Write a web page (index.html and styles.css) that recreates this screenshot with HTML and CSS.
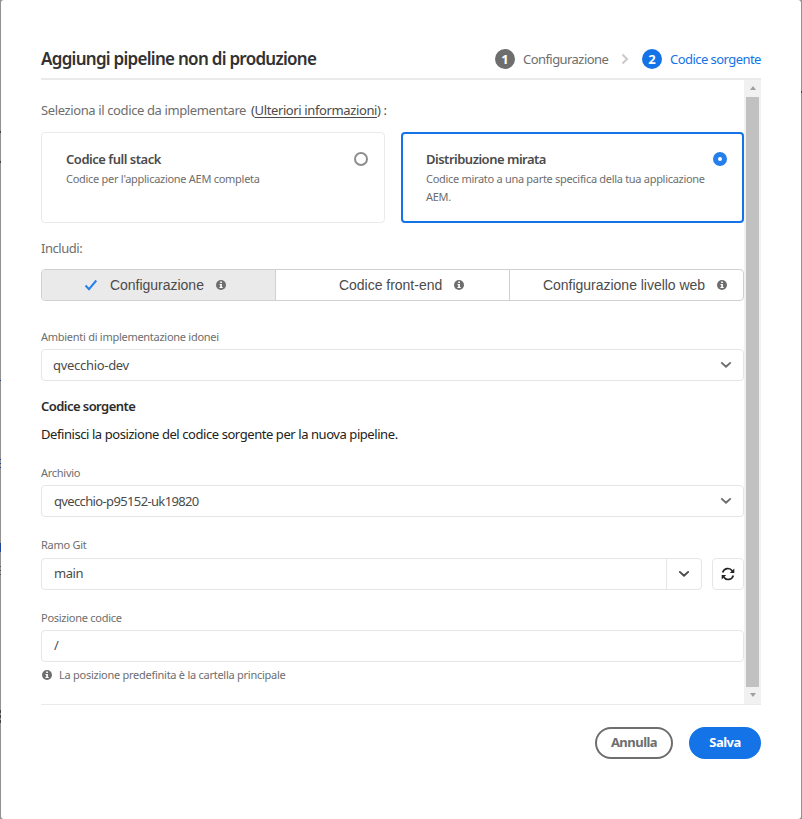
FILE: index.html
```html
<!DOCTYPE html>
<html lang="it">
<head>
<meta charset="utf-8">
<title>Aggiungi pipeline non di produzione</title>
<link rel="stylesheet" href="styles.css">
</head>
<body>
<svg class="defs" width="0" height="0">
  <symbol id="info" viewBox="0 0 10 10"><circle cx="5" cy="5" r="5" fill="#6e6e6e"/><path d="M4.2 1.6h1.7v1.5H4.2zM3.5 4h2.4v3h.8v1.100H3.400V7h.8V5.100h-.7z" fill="#fff"/></symbol>
  <symbol id="chevron" viewBox="0 0 12 8"><path d="M1.800 1.900 6 5.800l4.200-3.900" fill="none" stroke="currentColor" stroke-width="1.900" stroke-linecap="round" stroke-linejoin="round"/></symbol>
</svg>
<div class="dialog">
  <header class="header">
    <h1 class="title">Aggiungi pipeline non di produzione</h1>
    <div class="steps">
      <span class="num">1</span><span class="step s1">Configurazione</span>
      <svg class="sep" width="8" height="12" viewBox="0 0 8 12"><path d="M1.500 1.500 6 6l-4.500 4.500" fill="none" stroke="#cacaca" stroke-width="2"/></svg>
      <span class="num active">2</span><span class="step s2">Codice sorgente</span>
    </div>
  </header>
  <div class="scroller">
    <main class="content">
      <p class="intro"><span class="t-intro">Seleziona il codice da implementare</span><span class="more">(<a>Ulteriori informazioni</a>) :</span></p>
      <div class="cards">
        <section class="card">
          <div class="card-head"><h2>Codice full stack</h2><i class="radio"></i></div>
          <p>Codice per l'applicazione AEM completa</p>
        </section>
        <section class="card selected">
          <div class="card-head"><h2>Distribuzione mirata</h2><i class="radio on"></i></div>
          <p>Codice mirato a una parte specifica della tua applicazione<br>AEM.</p>
        </section>
      </div>
      <p class="include">Includi:</p>
      <div class="segments">
        <div class="segment on"><svg class="check" width="14" height="12" viewBox="0 0 14 12"><path d="M1.500 6.500 5 10.200 12.300 1.500" fill="none" stroke="#2680eb" stroke-width="2"/></svg><span>Configurazione</span><svg class="info"><use href="#info"/></svg></div>
        <div class="segment mid"><span>Codice front-end</span><svg class="info"><use href="#info"/></svg></div>
        <div class="segment last"><span>Configurazione livello web</span><svg class="info"><use href="#info"/></svg></div>
      </div>
      <div class="label first">Ambienti di implementazione idonei</div>
      <div class="field env"><span>qvecchio-dev</span><svg class="chev"><use href="#chevron"/></svg></div>
      <h3 class="section">Codice sorgente</h3>
      <p class="define">Definisci la posizione del codice sorgente per la nuova pipeline.</p>
      <div class="label repo-label">Archivio</div>
      <div class="field repo"><span>qvecchio-p95152-uk19820</span><svg class="chev"><use href="#chevron"/></svg></div>
      <div class="label branch-label">Ramo Git</div>
      <div class="branch">
        <div class="field combo"><span>main</span><div class="drop"><svg class="chev"><use href="#chevron"/></svg></div></div>
        <div class="refresh"><svg width="14" height="14" viewBox="0 0 14 14"><g fill="none" stroke="#222" stroke-width="1.600"><path d="M1.700 5.500A5.300 5.300 0 0 1 11.300 4"/><path d="M12.300 8.500A5.300 5.300 0 0 1 2.700 10"/></g><path d="M13.300 1.500V6H8.800zM.700 12.500V8h4.500z" fill="#222"/></svg></div>
      </div>
      <div class="label path-label">Posizione codice</div>
      <div class="field path"><span>/</span></div>
      <div class="hint"><svg class="info"><use href="#info"/></svg><span>La posizione predefinita è la cartella principale</span></div>
    </main>
    <div class="scrollbar"><i class="up"></i><div class="thumb"></div><i class="down"></i></div>
  </div>
  <footer class="footer"><div class="btn cancel">Annulla</div><div class="btn save">Salva</div></footer>
</div>
</body>
</html>
```
FILE: styles.css
```css
* { box-sizing: border-box; }
body { margin: 0; font: 13px/18px "Noto Sans", "Open Sans", sans-serif; letter-spacing: -.45px; color: #4b4b4b;
  /* dimmed page showing beside the dialog */
  background:
    linear-gradient(#444, #444) 0 131px / 1px 2px no-repeat,
    linear-gradient(#444, #444) 0 161px / 1px 2px no-repeat,
    linear-gradient(#444, #444) 801px 91px / 1px 2px no-repeat,
    linear-gradient(#24449a, #24449a) 0 380px / 1px 1px no-repeat,
    repeating-linear-gradient(#24449a 0 1px, #929292 1px 4px) 0 459px / 1px 9px no-repeat,
    linear-gradient(#24449a, #24449a) 0 543px / 1px 9px no-repeat,
    repeating-linear-gradient(#555 0 1px, #929292 1px 4px) 0 566px / 1px 9px no-repeat,
    repeating-linear-gradient(#444 0 3px, #929292 3px 5px) 0 710px / 1px 13px no-repeat,
    #929292; }
h1, h2, h3, p { margin: 0; }
i { display: block; }
span, h2 { white-space: nowrap; }
svg { display: block; flex: none; }
.defs { position: absolute; }
.dialog { height: 819px; margin: 0 1px; padding: 0 40px; background: #fff; border-radius: 3px; overflow: hidden; }
.header { height: 80px; padding-top: 40px; border-bottom: 2px solid #eaeaea; display: flex; justify-content: space-between; align-items: center; }
.title { font-size: 17px; line-height: 24px; font-weight: 600; letter-spacing: -.72px; color: #323232; }
.steps { display: flex; align-items: center; color: #6e6e6e; height: 38px; }
.num { width: 20px; height: 20px; border-radius: 50%; background: #6e6e6e; color: #fff; font-weight: 700; text-align: center; line-height: 20px; letter-spacing: 0; }
.num.active { background: #1473e6; }
.step { margin-left: 8px; }
.s1 { letter-spacing: -.56px; width: 85px; }
.s2 { letter-spacing: -.55px; color: #1473e6; width: 91px; }
.sep { margin: 0 13px; }
.scroller { height: 625px; border-bottom: 1px solid #eaeaea; display: flex; }
.content { width: 703px; }
.scrollbar { width: 17px; background: #f1f1f1; display: flex; flex-direction: column; align-items: center; }
.thumb { width: 13px; height: 590px; background: #c1c1c1; }
.up, .down { border: 3px solid transparent; width: 0; height: 0; }
.up { border-bottom: 4px solid #a0a0a0; margin: 3px 0 7px; }
.down { border-top: 4px solid #a0a0a0; margin-top: 6px; }
.intro { padding-top: 21px; height: 52px; display: flex; color: #6e6e6e; letter-spacing: -.38px; }
.t-intro { width: 210px; }
.more { color: #4b4b4b; }
.more a { text-decoration: underline; text-underline-offset: 2px; }
.cards { display: grid; grid-template-columns: 344px 343px; gap: 16px; height: 91px; }
.card { border: 1px solid #eaeaea; border-radius: 4px; padding: 17px 16px 0 24px; color: #6e6e6e; font-size: 11px; letter-spacing: -.28px; }
.card.selected { border: 2px solid #1473e6; padding: 16px 15px 0 23px; letter-spacing: -.3px; }
.card-head { display: flex; justify-content: space-between; align-items: center; height: 18px; margin-bottom: 2px; }
.card h2 { font-size: 13px; line-height: 18px; font-weight: 600; color: #4b4b4b; letter-spacing: -.47px; }
.card.selected h2 { letter-spacing: -.5px; }
.radio { width: 14px; height: 14px; border: 2px solid #8e8e8e; border-radius: 50%; }
.radio.on { border: 5px solid #2680eb; }
.include { color: #6e6e6e; margin-top: 16px; height: 30px; }
.segments { display: grid; grid-template-columns: 233px 234px 234px; height: 32px; border: 1px solid #d0d0d0; border-radius: 4px; overflow: hidden; font: 14px/30px "Liberation Sans", Arial, sans-serif; letter-spacing: -.02px; }
.segment { display: flex; align-items: center; border-left: 1px solid #d0d0d0; }
.segment.on { background: #eaeaea; border-left: 0; padding-left: 42px; }
.check { margin-right: 12px; }
.segment .info { margin-left: 12px; }
.segment.mid { padding-left: 63px; }
.segment.last { padding-left: 33px; }
.info { width: 10px; height: 10px; }
.label { font-size: 11px; letter-spacing: -.27px; color: #6e6e6e; height: 20px; }
.label.first { margin-top: 27px; height: 21px; }
.field { height: 32px; border: 1px solid #e6e6e6; border-radius: 4px; display: flex; justify-content: space-between; align-items: center; padding: 0 11px 0 12px; }
.env { letter-spacing: -.3px; padding-left: 11px; }
.chev { width: 12px; height: 8px; color: #6e6e6e; }
.section { font-size: 13px; font-weight: 600; letter-spacing: -.55px; color: #2c2c2c; margin-top: 16px; height: 28px; }
.define { color: #222; letter-spacing: -.43px; height: 39px; }
.repo-label { height: 21px; }
.repo { letter-spacing: -.64px; }
.branch-label { margin-top: 19px; height: 22px; }
.branch { display: flex; justify-content: space-between; }
.combo { width: 661px; padding-right: 0; }
.combo span, .path span { padding-bottom: 2px; }
.drop { width: 35px; height: 30px; border-left: 1px solid #e6e6e6; display: grid; place-items: center; }
.drop .chev { color: #4b4b4b; }
.refresh { width: 32px; height: 32px; border: 1px solid #e6e6e6; border-radius: 4px; display: grid; place-items: center; }
.path-label { margin-top: 19px; height: 21px; }
.hint { display: flex; align-items: center; gap: 7px; padding-left: 1px; margin-top: 4px; font-size: 11px; letter-spacing: -.26px; color: #6e6e6e; }
.footer { display: flex; justify-content: flex-end; gap: 16px; padding-top: 22px; }
.btn { height: 32px; border-radius: 16px; font-size: 13px; font-weight: 700; line-height: 27px; text-align: center; letter-spacing: -.53px; border: 2px solid #6e6e6e; color: #6e6e6e; width: 78px; }
.save { width: 72px; background: #1473e6; border-color: #1473e6; color: #fff; }
```
